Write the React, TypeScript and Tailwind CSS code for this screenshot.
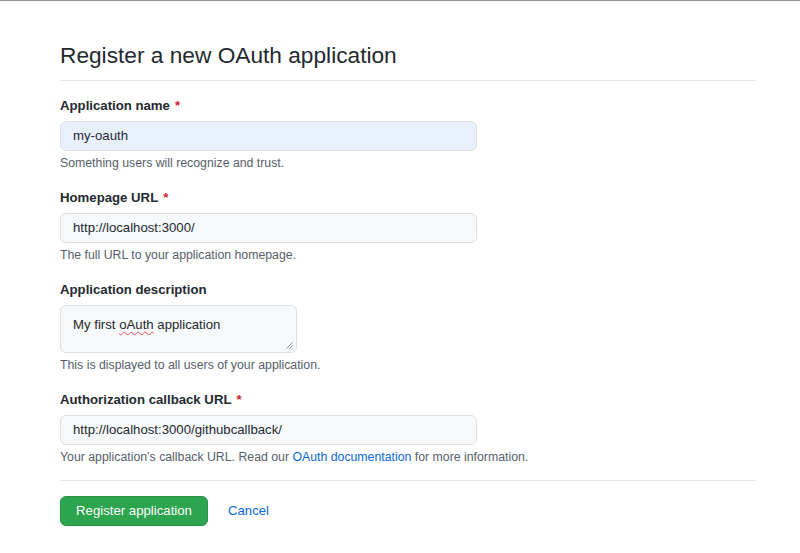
import React from 'react';

interface FieldProps {
  label: string;
  required?: boolean;
  children: React.ReactNode;
  note: React.ReactNode;
  first?: boolean;
}

function Field({ label, required, children, note, first }: FieldProps) {
  return (
    <div className={first ? '' : 'mt-4'}>
      <label className="block text-[13.2px] leading-[19px] font-bold text-[#24292f] mb-[6px]">
        {label}
        {required && <span className="text-[#cf222e] ml-[5px]">*</span>}
      </label>
      {children}
      <p className="mt-1 text-[12.3px] leading-[17px] text-[#57606a]">{note}</p>
    </div>
  );
}

function TextInput({ value, autofilled }: { value: string; autofilled?: boolean }) {
  return (
    <div
      className={`w-[417px] h-[30px] flex items-center px-3 rounded-[6px] border border-[#dde1e6] text-[13.2px] text-[#24292f] ${
        autofilled ? 'bg-[#e8f0fe]' : 'bg-[#f6f8fa]'
      }`}
    >
      {value}
    </div>
  );
}

export default function App() {
  return (
    <div className="min-h-[553px] bg-white border-t border-[#8e9093] font-['Liberation_Sans',Arial,sans-serif]">
      <div className="ml-[60px] w-[696px] pt-[40px]">
        <div className="pb-[11px] border-b border-[#e4e7ea]">
          <h1 className="text-[22.7px] leading-[28px] font-normal text-[#24292f]">
            Register a new OAuth application
          </h1>
        </div>

        <form className="pt-[15px]">
          <Field label="Application name" required first note="Something users will recognize and trust.">
            <TextInput value="my-oauth" autofilled />
          </Field>

          <Field label="Homepage URL" required note="The full URL to your application homepage.">
            <TextInput value="http://localhost:3000/" />
          </Field>

          <Field label="Application description" note="This is displayed to all users of your application.">
            <div className="relative w-[237px] h-[48px] rounded-[6px] border border-[#dde1e6] bg-[#f6f8fa] px-3 pt-[9px] text-[13.2px] leading-[19px] text-[#24292f]">
              My first{' '}
              <span className="underline decoration-wavy decoration-[#e5484d] decoration-1 underline-offset-[2px]">
                oAuth
              </span>{' '}
              application
              <svg className="absolute right-[3px] bottom-[3px]" width="7" height="7" viewBox="0 0 7 7">
                <path d="M6.5 0.5 L0.5 6.5 M6.5 3.5 L3.5 6.5" stroke="#8a8f95" strokeWidth="1" />
              </svg>
            </div>
          </Field>

          <Field
            label="Authorization callback URL"
            required
            note={
              <>
                Your application’s callback URL. Read our{' '}
                <a className="text-[#0969da]" href="#">
                  OAuth documentation
                </a>{' '}
                for more information.
              </>
            }
          >
            <TextInput value="http://localhost:3000/githubcallback/" />
          </Field>

          <div className="mt-[14px] border-t border-[#e4e7ea]" />

          <div className="mt-[15px] flex items-center">
            <button
              type="button"
              className="w-[148px] h-[30px] flex items-center justify-center rounded-[6px] bg-[#2da44e] border border-[#2a9147] text-white text-[13.2px]"
            >
              Register application
            </button>
            <a href="#" className="ml-5 text-[13.2px] text-[#0969da]">
              Cancel
            </a>
          </div>
        </form>
      </div>
    </div>
  );
}
